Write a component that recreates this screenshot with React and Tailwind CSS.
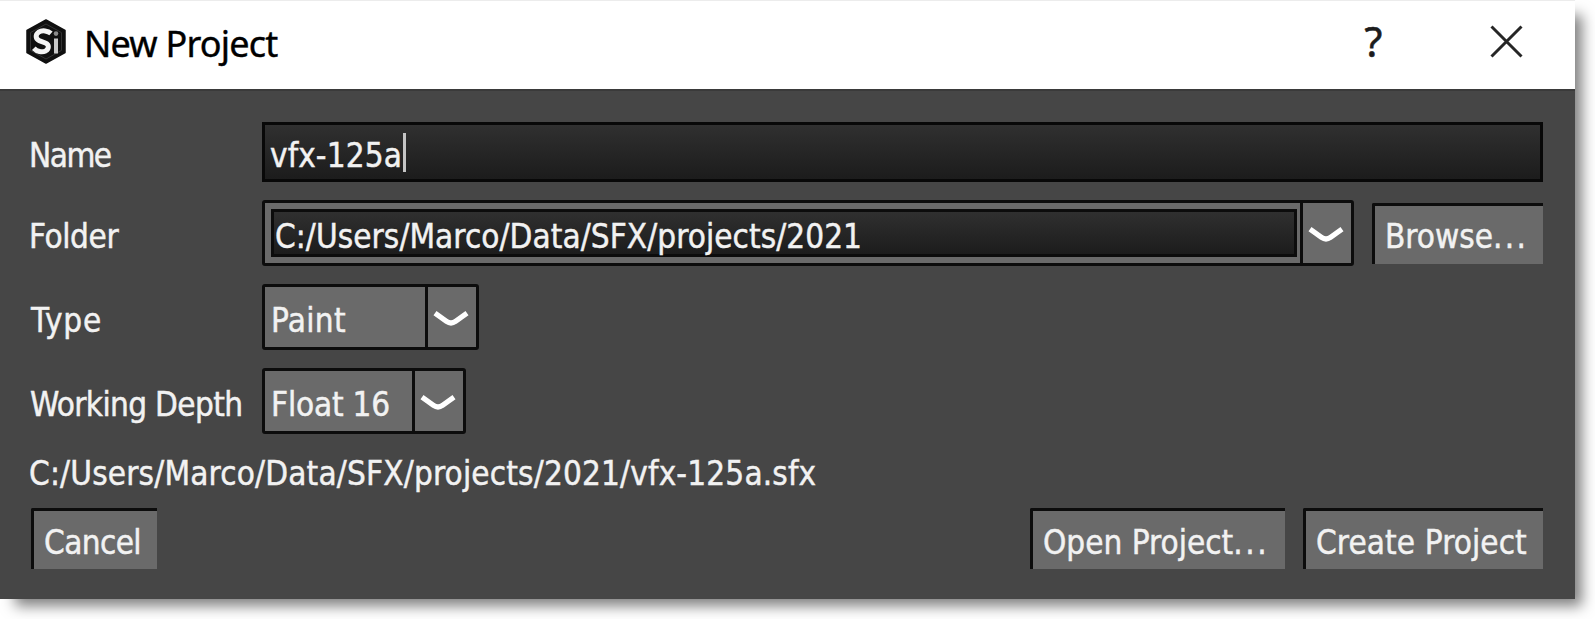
import React from 'react'

function Logo() {
  return (
    <svg className="h-[45px] w-[42px] shrink-0" viewBox="0 0 42 45">
      <path d="M21 1 40 11.5V33.5L21 44 2 33.5V11.5Z" fill="#101010" stroke="#101010" strokeWidth="1.5" strokeLinejoin="round" />
      <path d="M21 5 36.5 13.6V31.4L21 40 5.5 31.4V13.6Z" fill="none" stroke="#333" strokeWidth="1" />
      <path
        d="M26 14.4C23 11.8 17.3 10.9 13.6 13.2 10 15.8 10.6 20 14.2 21.6L20.4 24C24.6 25.7 24 30 20.6 31.9 17 33.7 12 32.6 8.8 29.2"
        fill="none"
        stroke="#f4f4f4"
        strokeWidth="5"
      />
      <path d="M31 19.5V34.5" stroke="#c8c8c8" strokeWidth="4" />
      <circle cx="31" cy="14.6" r="2.3" fill="#8c8c8c" />
    </svg>
  )
}

function Chevron() {
  return (
    <svg className="h-[18px] w-[36px]" viewBox="0 0 36 18">
      <path d="M2 3.2 L13.5 11.4 Q18 14.6 22.5 11.4 L34 3.2" fill="none" stroke="#fff" strokeWidth="5.2" />
    </svg>
  )
}

function Label({ className, children }) {
  return <div className={`w-[234px] shrink-0 pt-2 whitespace-nowrap ${className}`}>{children}</div>
}

function Select({ className, text, children }) {
  return (
    <div className={`flex h-[66px] rounded-[3px] border-[3px] border-[#0c0c0c] bg-[#6a6a6a] ${className}`}>
      <div className={`flex flex-1 items-center pt-2 pl-[6px] whitespace-nowrap ${text}`}>{children}</div>
      <div className="flex w-[51px] items-center justify-center border-l-[3px] border-[#0c0c0c] pt-[3px] pr-[3px]">
        <Chevron />
      </div>
    </div>
  )
}

function Button({ className, children }) {
  return (
    <button
      className={`flex h-[61px] shrink-0 items-center rounded-tl-[2px] border-t-[3px] border-l-[3px] border-[#0c0c0c] bg-[#6a6a6a] pt-[5px] pl-2.5 whitespace-nowrap ${className}`}
    >
      {children}
    </button>
  )
}

export default function App() {
  return (
    <div className="h-[619px] w-[1595px] overflow-hidden bg-white">
      <div className="h-[599px] w-[1575px] bg-[#464646] shadow-[11px_11px_13px_-4px_rgba(0,0,0,0.5)]">
        <header className="flex h-[89px] items-center border-t border-[#ececec] bg-white pr-[52px] pl-[25px] text-black">
          <div className="pb-[7px]">
            <Logo />
          </div>
          <h1 className="ml-[17px] pb-[3px] font-['Noto_Sans'] text-[36px] leading-[48px] tracking-[-0.8px] [-webkit-text-stroke:0.4px_black]">
            New Project
          </h1>
          <div className="ml-auto flex items-center pb-2">
            <span className="w-[19px] text-center font-['Noto_Sans'] text-[41px] leading-[48px] text-[#1c1c1c] [-webkit-text-stroke:0.6px_#1c1c1c]">
              ?
            </span>
            <svg className="ml-[107px] h-[33px] w-[33px]" viewBox="0 0 33 33">
              <path d="M1.5 1.5 31.5 31.5M31.5 1.5 1.5 31.5" stroke="#262626" strokeWidth="3" fill="none" />
            </svg>
          </div>
        </header>
        <main className="border-t-2 border-[#3a3a3a] pt-[31px] pr-8 pl-7 font-['DejaVu_Sans_Condensed'] text-[33px] leading-[40px] text-[#f2f2f2] [-webkit-text-stroke:0.45px_#f2f2f2]">
          <div className="flex h-[60px] items-center">
            <Label className="pl-px tracking-[-1.5px]">Name</Label>
            <div className="flex h-[60px] flex-1 items-center border-[3px] border-[#080808] bg-linear-to-b from-[#303030] to-[#1c1c1c] pt-2 pl-[5px] tracking-[0.1px]">
              vfx-125a
              <span className="mt-[-7px] ml-px h-[39px] w-[3px] bg-[#c4c4c4]" />
            </div>
          </div>
          <div className="mt-[18px] flex h-[66px] items-center">
            <Label className="pl-px tracking-[-0.4px]">Folder</Label>
            <div className="flex h-[66px] w-[1092px] rounded-[3px] border-[3px] border-[#0c0c0c] bg-[#6a6a6a]">
              <div className="flex-1 py-[6px] pr-[3px] pl-[6px]">
                <div className="flex h-[48px] items-center border-[3px] border-[#0c0c0c] bg-linear-to-b from-[#303030] to-[#1c1c1c] pt-2 pl-px tracking-[0.06px]">
                  C:/Users/Marco/Data/SFX/projects/2021
                </div>
              </div>
              <div className="flex w-[51px] items-center justify-center border-l-[3px] border-[#0c0c0c] pt-[3px] pr-[3px]">
                <Chevron />
              </div>
            </div>
            <Button className="ml-[18px] w-[171px]">
              Browse<span className="tracking-[2.3px]">...</span>
            </Button>
          </div>
          <div className="mt-[18px] flex h-[66px] items-center">
            <Label className="pl-[3px] tracking-[0.9px]">Type</Label>
            <Select className="w-[217px]" text="tracking-[0.3px]">Paint</Select>
          </div>
          <div className="mt-[18px] flex h-[66px] items-center">
            <Label className="pl-[2px] tracking-[-0.65px]">Working Depth</Label>
            <Select className="w-[204px]" text="tracking-[-0.2px]">Float 16</Select>
          </div>
          <div className="mt-5 h-[40px] pl-px tracking-[0.17px]">C:/Users/Marco/Data/SFX/projects/2021/vfx-125a.sfx</div>
          <footer className="mt-[14px] flex pl-[3px]">
            <Button className="w-[126px] tracking-[-0.6px]">Cancel</Button>
            <Button className="ml-auto w-[255px]">
              Open Project<span className="tracking-[2.6px]">...</span>
            </Button>
            <Button className="ml-[18px] w-[240px] tracking-[0.1px]">Create Project</Button>
          </footer>
        </main>
      </div>
    </div>
  )
}
